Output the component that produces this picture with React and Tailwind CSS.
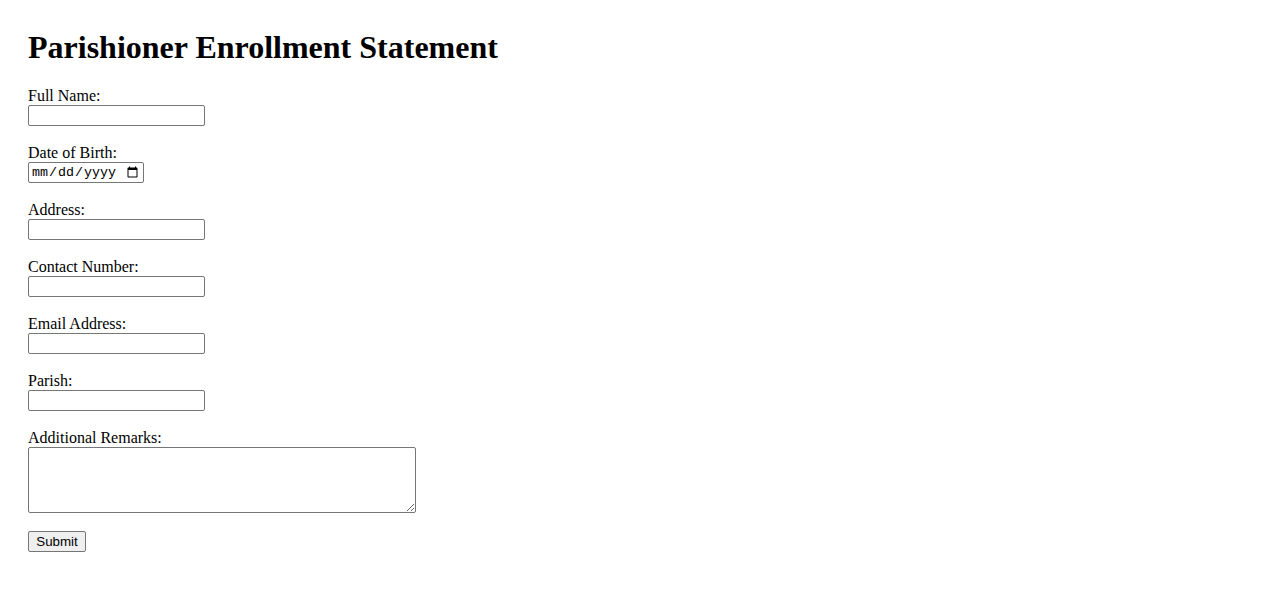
export default function App() {
  const fields = [
    { id: "fullName", label: "Full Name:", type: "text" },
    { id: "dob", label: "Date of Birth:", type: "date" },
    { id: "address", label: "Address:", type: "text" },
    { id: "contact", label: "Contact Number:", type: "tel" },
    { id: "email", label: "Email Address:", type: "email" },
    { id: "parish", label: "Parish:", type: "text" },
  ];

  return (
    <div className="min-h-[601px] bg-white px-[28px] pt-[29px] text-black font-['Liberation_Serif','Times_New_Roman',serif]">
      <h1 className="text-[32px] font-bold leading-[37px] mb-[20px]">Parishioner Enrollment Statement</h1>

      <form onSubmit={(e) => e.preventDefault()}>
        {fields.map((f) => (
          <div key={f.id} className="mb-[17px]">
            <label htmlFor={f.id} className="block text-[16px] leading-[19px]">{f.label}</label>
            {f.type === "date" ? (
              <input
                id={f.id}
                type="date"
                className="block h-[21px] w-[116px] border border-[#767676] rounded-[2px] bg-white px-[2px] py-0 text-[13.33px] font-['Liberation_Mono',monospace]"
              />
            ) : (
              <input
                id={f.id}
                type={f.type}
                className="block h-[21px] w-[177px] border border-[#767676] rounded-[2px] bg-white px-[2px] py-[1px] text-[13.33px] font-['Liberation_Sans',Arial,sans-serif]"
              />
            )}
          </div>
        ))}

        <div className="mb-[18px]">
          <label htmlFor="remarks" className="block text-[16px] leading-[19px]">Additional Remarks:</label>
          <textarea
            id="remarks"
            className="block h-[66px] w-[388px] border border-[#767676] rounded-[2px] bg-white px-[2px] py-[2px] text-[13.33px] font-['Liberation_Mono',monospace]"
          />
        </div>

        <button
          type="submit"
          className="block h-[21px] w-[58px] border border-[#767676] rounded-[2px] bg-[#efefef] px-[6px] text-[13.33px] leading-[15px] font-['Liberation_Sans',Arial,sans-serif]"
        >
          Submit
        </button>
      </form>
    </div>
  );
}
